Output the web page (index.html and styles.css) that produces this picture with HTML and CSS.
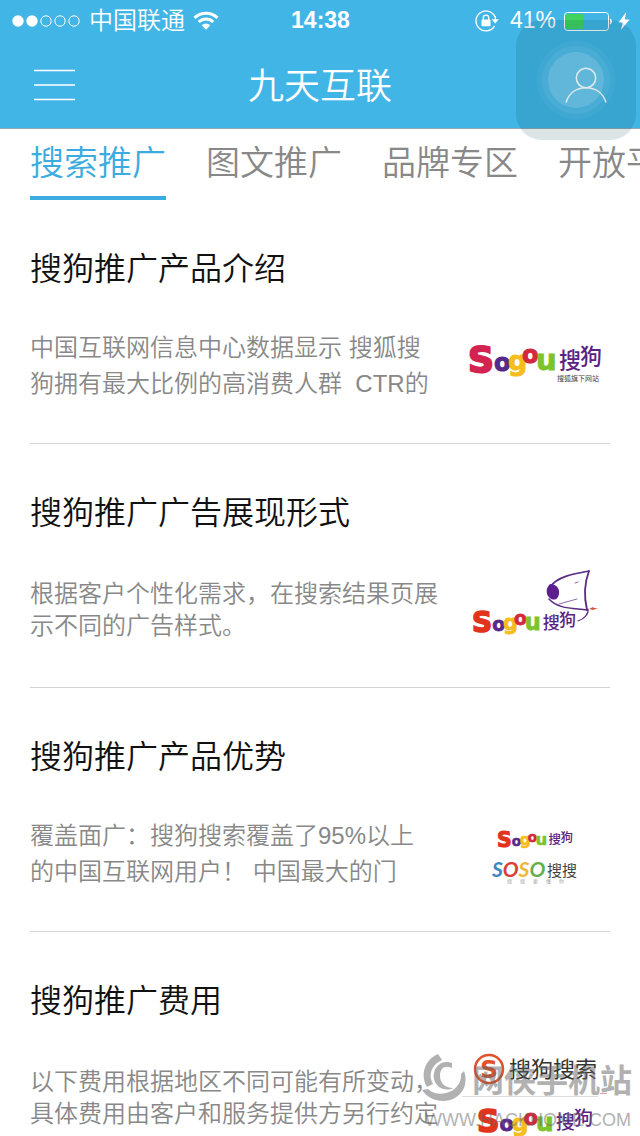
FILE: index.html
```html
<!DOCTYPE html>
<html lang="zh-CN">
<head>
    <meta charset="UTF-8">
    <meta name="viewport" content="width=device-width, initial-scale=1.0">
    <title>九天互联</title>
    <link rel="stylesheet" href="styles.css">
</head>
<body>
    <div class="app">
        <header class="header">
            <div class="status">
                <div class="status-left">
                    <svg class="signal" width="70" height="14" viewBox="0 0 70 14">
                        <circle cx="7" cy="7" r="5.7" fill="#fff"/>
                        <circle cx="21" cy="7" r="5.7" fill="#fff"/>
                        <g fill="none" stroke="#fff">
                            <circle cx="35" cy="7" r="5.2"/>
                            <circle cx="49" cy="7" r="5.2"/>
                            <circle cx="63" cy="7" r="5.2"/>
                        </g>
                    </svg>
                    <span class="carrier">中国联通</span>
                    <svg width="26" height="20" viewBox="0 0 26 20">
                        <g fill="none" stroke="#fff" stroke-width="3">
                            <path d="M1.5 6.8a16.5 16.5 0 0 1 23 0"/>
                            <path d="M5.7 11a10.4 10.4 0 0 1 14.6 0"/>
                        </g>
                        <path d="M8.7 14.2a6.2 6.2 0 0 1 8.6 0L13 18.8z" fill="#fff"/>
                    </svg>
                </div>
                <span class="time">14:38</span>
                <div class="status-right">
                    <svg width="24" height="22" viewBox="0 0 24 22">
                        <path d="M20.2 7A10 10 0 1 0 19.5 16.2" fill="none" stroke="#fff" stroke-width="1.3"/>
                        <path d="M20.3 6v5" stroke="#fff" stroke-width="1.3"/>
                        <path d="M16.6 9.3h7.2l-3.6 4.2z" fill="#fff"/>
                        <rect x="6.5" y="9.5" width="9" height="6.8" rx="1" fill="#fff"/>
                        <path d="M8.3 10V7.8a2.7 2.7 0 0 1 5.4 0V10" fill="none" stroke="#fff" stroke-width="1.4"/>
                    </svg>
                    <span class="percent">41%</span>
                    <svg width="50" height="20" viewBox="0 0 50 20">
                        <rect x="1.5" y="1.5" width="44" height="18" rx="3" fill="none" stroke="#fff"/>
                        <path d="M4 3h16v15H4a1.3 1.3 0 0 1-1.3-1.3V4.3A1.3 1.3 0 0 1 4 3z" fill="#40d35f"/>
                        <path d="M47 7.5a3.2 3.2 0 0 1 0 6z" fill="#fff"/>
                    </svg>
                    <svg width="12" height="20" viewBox="0 0 12 20">
                        <path d="M8.2 1L.5 11.5h4.1L3 19l8.6-10.500H6.800z" fill="#fff"/>
                    </svg>
                </div>
            </div>
            <div class="nav">
                <button class="icon-btn" type="button" aria-label="菜单">
                    <svg width="42" height="32" viewBox="0 0 42 32">
                        <path d="M1 1.5h41M1 16h41M1 30.5h41" stroke="#fff" stroke-width="1.5"/>
                    </svg>
                </button>
                <h1>九天互联</h1>
                <button class="icon-btn" type="button" aria-label="用户">
                    <svg width="42" height="38" viewBox="0 0 42 38">
                        <g fill="none" stroke="#fff" stroke-width="1.5">
                            <circle cx="21" cy="12" r="9.7"/>
                            <path d="M1 36.5C4 27 11.5 21.7 21 21.7S38 27 41 36.5"/>
                        </g>
                    </svg>
                </button>
            </div>
        </header>

        <nav class="tabs">
            <a class="tab active" href="#">搜索推广</a>
            <a class="tab" href="#">图文推广</a>
            <a class="tab" href="#">品牌专区</a>
            <a class="tab" href="#">开放平台</a>
        </nav>

        <main class="list">
            <article class="item">
                <h2>搜狗推广产品介绍</h2>
                <div class="row">
                    <p class="desc loose">中国互联网信息中心数据显示 搜狐搜<br>狗拥有最大比例的高消费人群&nbsp; CTR的</p>
                    <svg class="thumb" viewBox="0 0 150 120">
                        <svg class="sogou" x="8" y="37" width="134" height="40" viewBox="0 0 134 40">
                            <text class="s crimson" x="0" y="29">S</text>
                            <text class="o1" x="26" y="28">o</text>
                            <text class="g" x="40" y="27">g</text>
                            <text class="o2" x="54" y="20">o</text>
                            <text class="u" x="68" y="27">u</text>
                            <text class="cn" x="91" y="25">搜</text>
                            <text class="cn" x="112" y="21">狗</text>
                        </svg>
                        <text class="sub" x="97" y="75">搜狐旗下网站</text>
                    </svg>
                </div>
            </article>

            <article class="item">
                <h2>搜狗推广广告展现形式</h2>
                <div class="row">
                    <p class="desc">根据客户个性化需求，在搜索结果页展<br>示不同的广告样式。</p>
                    <svg class="thumb" viewBox="0 0 150 120">
                        <!-- dog head -->
                        <g fill="none" stroke="#5b2a86" stroke-linecap="round">
                            <path d="M90 37C97 27 112 24 129 21" stroke-width="1.6"/>
                            <path d="M129 21C124 34 124 47 127 60" stroke-width="1.8"/>
                            <path d="M89 49C98 59 112 58 127 60" stroke-width="1.5"/>
                            <path d="M128 59C129 64 124 69 118 71" stroke-width="1.2"/>
                            <path d="M99 54L117 49M115 33l3-1" stroke-width=".7"/>
                        </g>
                        <path d="M90 34C98 34 101 41 98 47C95 52 89 49 87 44C86 40 87 37 90 34z" fill="#5c1f8d"/>
                        <path d="M129 59l4-2 1 1 4 0-5 2z" fill="#d2583a"/>
                        <svg class="sogou" x="12" y="59" width="104" height="32" viewBox="0 0 134 40">
                            <text class="s" x="0" y="29">S</text>
                            <text class="o1" x="26" y="28">o</text>
                            <text class="g" x="40" y="27">g</text>
                            <text class="o2" x="54" y="20">o</text>
                            <text class="u" x="68" y="27">u</text>
                            <text class="cn" x="91" y="25">搜</text>
                            <text class="cn" x="112" y="21">狗</text>
                        </svg>
                    </svg>
                </div>
            </article>

            <article class="item">
                <h2>搜狗推广产品优势</h2>
                <div class="row">
                    <p class="desc loose">覆盖面广：搜狗搜索覆盖了95%以上<br>的中国互联网用户！ 中国最大的门</p>
                    <svg class="thumb" viewBox="0 0 150 120">
                        <svg class="sogou" x="37" y="36" width="76" height="23" viewBox="0 0 134 40">
                            <text class="s" x="0" y="29">S</text>
                            <text class="o1" x="26" y="28">o</text>
                            <text class="g" x="40" y="27">g</text>
                            <text class="o2" x="54" y="20">o</text>
                            <text class="u" x="68" y="27">u</text>
                            <text class="cn" x="91" y="25">搜</text>
                            <text class="cn" x="112" y="21">狗</text>
                        </svg>
                        <text class="soso" x="32" y="83"><tspan fill="#3d86c0">S</tspan><tspan fill="#d9403c">O</tspan><tspan fill="#eeb73b">S</tspan><tspan fill="#63b04c">O</tspan></text>
                        <text class="soso-cn" x="87" y="82">搜搜</text>
                        <text class="tiny" y="89" x="47 60 73 86 99">搜搜更懂你</text>
                    </svg>
                </div>
            </article>

            <article class="item">
                <h2>搜狗推广费用</h2>
                <div class="row">
                    <p class="desc">以下费用根据地区不同可能有所变动，<br>具体费用由客户和服务提供方另行约定</p>
                    <svg class="thumb" viewBox="0 0 150 120">
                        <circle cx="29" cy="31" r="14" fill="none" stroke="#e2512b" stroke-width="2.5"/>
                        <text class="badge-s" x="29" y="40">S</text>
                        <text class="search-cn" x="49" y="39">搜狗搜索</text>
                        <path d="M2 58.5h136" stroke="#ddd"/>
                        <path d="M140 55.5h7" stroke="#e9a0a0"/>
                        <svg class="sogou" x="17" y="69" width="116" height="35" viewBox="0 0 134 40">
                            <text class="s" x="0" y="29">S</text>
                            <text class="o1" x="26" y="28">o</text>
                            <text class="g" x="40" y="27">g</text>
                            <text class="o2" x="54" y="20">o</text>
                            <text class="u" x="68" y="27">u</text>
                            <text class="cn" x="91" y="25">搜</text>
                            <text class="cn" x="112" y="21">狗</text>
                        </svg>
                    </svg>
                </div>
            </article>
        </main>

        <!-- floating home button -->
        <div class="assist">
            <svg width="120" height="120" viewBox="0 0 120 120">
                <g fill="#fff">
                    <circle cx="60" cy="60" r="39" fill-opacity=".04"/>
                    <circle cx="60" cy="60" r="34" fill-opacity=".05"/>
                    <circle cx="60" cy="60" r="28" fill-opacity=".14"/>
                </g>
            </svg>
        </div>

        <div class="watermark">
            <div class="watermark-top">
                <svg width="44" height="48" viewBox="0 0 44 48">
                    <path d="M16 0C2 6-2 22 5 33L11 30C6 21 9 11 20 6z"/>
                    <path d="M0 36C10 51 34 51 42 34C44 29 44 22 42 17L39 20C40 29 33 37 24 39C15 41 9 38 6 35z"/>
                    <path d="M30 9C19 5 10 14 12 25C14 34 24 38 31 34C23 34 18 29 18 22C18 14 23 11 30 14z"/>
                </svg>
                <span class="watermark-name">网侠手机站</span>
            </div>
            <span class="watermark-url">WWW.HACKHOME.COM</span>
        </div>
    </div>
</body>
</html>
```
FILE: styles.css
```css
* {
    box-sizing: border-box;
}
body {
    margin: 0;
    font-family: "Liberation Sans", "Noto Sans CJK SC", sans-serif;
    font-weight: 350;
    background-color: #fff;
    color: #111;
}
.app {
    position: relative;
    display: flex;
    flex-direction: column;
    height: 100vh;
    overflow: hidden;
}
svg {
    display: block;
    flex: none;
}

/* header */
.header {
    flex: none;
    background-color: #42b5e7;
    border-bottom: 1px solid #8fa9b5;
    color: #fff;
}
.status {
    display: grid;
    grid-template-columns: 1fr auto 1fr;
    align-items: center;
    height: 41px;
    padding: 0 10px 0 11px;
}
.status-left,
.status-right {
    display: flex;
    align-items: center;
}
.status-left {
    gap: 8px;
}
.status-right {
    justify-content: flex-end;
    gap: 5px;
}
.carrier {
    font-size: 24px;
    line-height: 40px;
}
.time {
    font-size: 23px;
    font-weight: bold;
}
.percent {
    margin: 0 2px 0 6px;
    font-size: 23px;
}
.nav {
    display: flex;
    align-items: center;
    justify-content: space-between;
    height: 87px;
    padding: 0 33px;
}
.nav h1 {
    margin: 0;
    padding-top: 4px;
    font-size: 36px;
    font-weight: 350;
    line-height: 82px;
}
.icon-btn {
    padding: 0;
    border: none;
    background: none;
    cursor: pointer;
}

/* tabs */
.tabs {
    display: flex;
    flex: none;
    gap: 40px;
    padding-left: 30px;
    overflow: hidden;
}
.tab {
    flex: none;
    padding-top: 1px;
    border-bottom: 4px solid transparent;
    font-size: 34px;
    line-height: 66px;
    color: #888;
    text-decoration: none;
}
.tab.active {
    color: #3cace0;
    border-color: #3cace0;
}

/* list */
.list {
    flex: 1;
    min-height: 0;
    padding: 0 30px;
    overflow: hidden;
}
.item {
    padding: 45px 0 17px;
    border-bottom: 1px solid #d4d4d4;
}
.item h2 {
    margin: 0 0 13px;
    font-size: 32px;
    font-weight: 350;
    line-height: 48px;
}
.row {
    display: flex;
    align-items: center;
    justify-content: space-between;
}
.desc {
    margin: 0;
    font-size: 24px;
    line-height: 32px;
    color: #888;
    white-space: nowrap;
}
.desc.loose {
    line-height: 36px;
}
.thumb {
    width: 150px;
    height: 120px;
}

/* logos */
.sogou {
    overflow: visible;
    font-family: "DejaVu Sans", sans-serif;
    font-weight: bold;
    font-size: 24px;
    stroke-width: 1;
}
.s {
    font-size: 36px;
    fill: #e2341d;
    stroke: #e2341d;
    stroke-width: 2;
}
.s.crimson {
    fill: #d32350;
    stroke: #d32350;
}
.o1 {
    fill: #562a8c;
    stroke: #562a8c;
}
.g {
    font-size: 27px;
    fill: #f6bd1b;
    stroke: #f6bd1b;
}
.o2 {
    fill: #d22a3c;
    stroke: #d22a3c;
}
.u {
    font-size: 29px;
    fill: #7dc42c;
    stroke: #7dc42c;
}
.cn {
    font-family: "Noto Sans CJK SC", sans-serif;
    font-weight: 500;
    font-size: 22px;
    fill: #5a2382;
}
.sub {
    font-family: "Noto Sans CJK SC", sans-serif;
    font-size: 7px;
    font-weight: 400;
    fill: #444;
}
.soso {
    font-family: Lato, sans-serif;
    font-size: 21px;
    font-weight: bold;
    font-style: italic;
}
.soso-cn {
    font-size: 15px;
    font-weight: 400;
    fill: #444;
}
.tiny {
    font-size: 5px;
    fill: #999;
}
.badge-s {
    font-family: "DejaVu Sans", sans-serif;
    font-size: 25px;
    font-weight: bold;
    text-anchor: middle;
    fill: #e2512b;
}
.search-cn {
    font-size: 22px;
    font-weight: 400;
    fill: #333;
}

/* overlays */
.assist {
    position: absolute;
    top: 20px;
    right: 4px;
    border-radius: 26px;
    background-color: rgba(0, 70, 80, 0.14);
    pointer-events: none;
}
.watermark {
    position: absolute;
    right: 8px;
    bottom: 4px;
    color: #666;
    opacity: 0.5;
    pointer-events: none;
}
.watermark-top {
    display: flex;
    align-items: center;
    gap: 6px;
    height: 48px;
    margin-left: -3px;
    fill: #666;
}
.watermark-name {
    padding-top: 6px;
    font-size: 32px;
    font-weight: bold;
    line-height: 42px;
}
.watermark-url {
    display: block;
    margin-top: 6px;
    font-size: 18px;
    line-height: 24px;
}
```
